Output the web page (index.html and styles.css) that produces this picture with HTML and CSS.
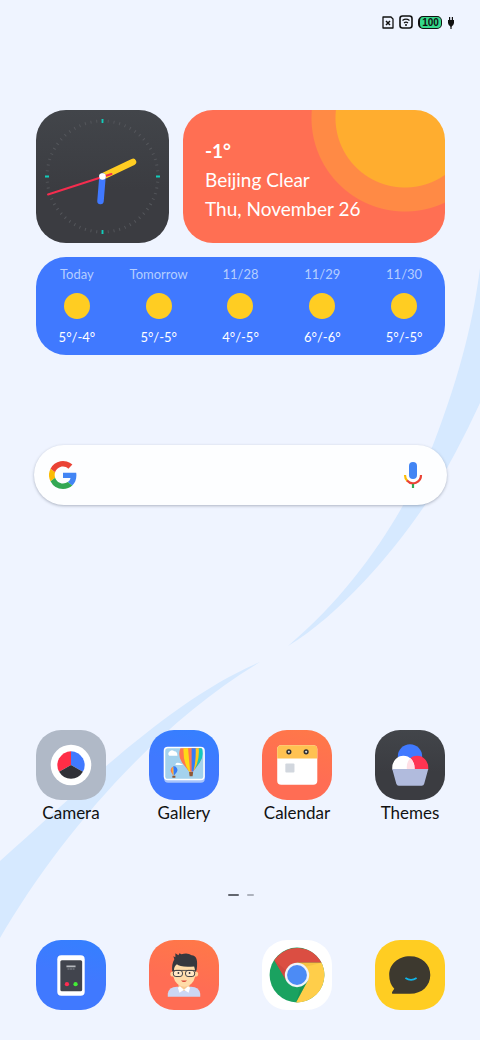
FILE: index.html
```html
<!DOCTYPE html>
<html lang="en">
<head>
    <meta charset="UTF-8">
    <meta name="viewport" content="width=device-width, initial-scale=1.0">
    <title>Home Screen</title>
    <link rel="stylesheet" href="styles.css">
</head>
<body>
    <svg class="wallpaper" viewBox="0 0 480 1040" preserveAspectRatio="none" aria-hidden="true">
        <path fill="#d6e9ff" d="M480 268C474 315 462 370 433 445C405 510 360 585 288 646C340 615 395 550 425 505C448 469 465 435 480 403Z"/>
        <path fill="#d6e9ff" d="M260 662C170 700 80 790 0 861V938C60 835 155 725 260 662Z"/>
    </svg>

    <div class="home">
        <header class="status-bar">
            <svg width="12" height="13" viewBox="0 0 12 13" fill="none" stroke="#111" aria-label="No SIM">
                <path d="M1 1h8l2 2v9H1z" stroke-width="1.3" stroke-linejoin="round"/>
                <path d="M4 5l4 4M8 5l-4 4" stroke-width="1.5"/>
            </svg>
            <svg width="14" height="14" viewBox="0 0 14 14" fill="none" stroke="#111" aria-label="Wi-Fi">
                <rect x="1" y="1" width="12" height="12" rx="2.5" stroke-width="1.6"/>
                <path d="M3.5 5.5q3.5-2.6 7 0M5 8q2-1.6 4 0" stroke-width="1.3"/>
                <circle cx="7" cy="10" r="1" fill="#111" stroke="none"/>
            </svg>
            <span class="battery">100</span>
            <svg width="8" height="14" viewBox="0 0 8 14" aria-label="Charging">
                <path d="M2.6 2v4M5.4 2v4M4 8v6" stroke="#111" stroke-width="1.2"/>
                <path d="M1 5h6v3q0 2-3 4q-3-2-3-4z" fill="#111"/>
            </svg>
        </header>

        <section class="widgets">
            <svg class="clock" viewBox="0 0 133 133" role="img" aria-label="Clock">
                <circle class="ticks" cx="66.5" cy="66.5" r="55.5" pathLength="360"/>
                <circle class="ticks-main" cx="66.5" cy="66.5" r="55.5" pathLength="360"/>
                <path d="M66.5 66.5L97 52" stroke="#ffcd22" stroke-width="6.5"/>
                <path d="M66.5 66.5L64.5 91" stroke="#4079ff" stroke-width="6.5"/>
                <path d="M12 84.5L75.5 64" stroke="#f42c4e" stroke-width="2"/>
                <circle cx="66.5" cy="66.5" r="3.3" fill="#fff"/>
            </svg>
            <div class="weather">
                <p class="temp">-1°</p>
                <p>Beijing Clear</p>
                <p>Thu, November 26</p>
            </div>
            <ul class="forecast">
                <li><span>Today</span><i class="sun"></i><b>5°/-4°</b></li>
                <li><span>Tomorrow</span><i class="sun"></i><b>5°/-5°</b></li>
                <li><span>11/28</span><i class="sun"></i><b>4°/-5°</b></li>
                <li><span>11/29</span><i class="sun"></i><b>6°/-6°</b></li>
                <li><span>11/30</span><i class="sun"></i><b>5°/-5°</b></li>
            </ul>
        </section>

        <form class="search">
            <svg width="28" height="28" viewBox="0 0 48 48" aria-hidden="true">
                <path fill="#fbbc05" d="M10.5 28.6A14 14 0 0 1 10.5 19.4L2.6 13.2a24 24 0 0 0 0 21.6z"/>
                <path fill="#ea4335" d="M24 9.5c3.5 0 6.7 1.2 9.2 3.6l6.9-6.9A24 24 0 0 0 2.6 13.2l7.9 6.2C12.4 13.7 17.7 9.5 24 9.5z"/>
                <path fill="#4285f4" d="M47 24.5c0-1.6-.2-3.1-.4-4.5H24v9h12.9c-.6 3-2.3 5.5-4.8 7.2l7.7 6C44.4 38 47 32 47 24.5z"/>
                <path fill="#34a853" d="M24 48c6.5 0 11.9-2.1 15.9-5.8l-7.7-6c-2.2 1.5-5 2.3-8.2 2.3-6.3 0-11.6-4.2-13.5-9.9l-7.9 6.2A24 24 0 0 0 24 48z"/>
            </svg>
            <input type="text" aria-label="Search">
            <button type="button" aria-label="Voice search">
                <svg width="20" height="28" viewBox="0 0 20 28" fill="none" stroke-width="2.2">
                    <rect x="6" y="1" width="8" height="17" rx="4" fill="#4285f4"/>
                    <path d="M2 14a8 8 0 0 0 2.500 6" stroke="#fbbc05"/>
                    <path d="M4 19.500A8 8 0 0 0 18 14" stroke="#ea4335"/>
                    <path d="M10 23v4" stroke="#34a853"/>
                </svg>
            </button>
        </form>

        <nav class="apps">
            <a class="app" href="#camera">
                <svg class="icon camera" viewBox="0 0 69 69" aria-hidden="true">
                    <circle cx="34.5" cy="34.5" r="20" fill="#fff"/>
                    <path fill="#ff2d46" d="M34.5 34.5V21a13.5 13.5 0 0 0-11.7 20.2z"/>
                    <path fill="#4079ff" d="M34.5 34.5V21a13.5 13.5 0 0 1 11.7 20.2z"/>
                    <path fill="#303137" d="M34.5 34.5l11.7 6.7a13.5 13.5 0 0 1-23.4 0z"/>
                </svg>
                <span>Camera</span>
            </a>
            <a class="app" href="#gallery">
                <svg class="icon blue" viewBox="0 0 69 69" aria-hidden="true">
                    <rect x="15" y="20" width="40" height="32" rx="4" fill="#a9c4fb"/>
                    <rect x="14.5" y="16.5" width="40.5" height="33" rx="4" fill="#fff"/>
                    <rect x="16" y="18" width="37.5" height="30" rx="2.5" fill="#a4d2ed"/>
                    <path fill="#fff" d="M20 25.5a2.5 2.5 0 0 1 0-4q2-3 5-.5q3 0 3 4.500zM26 34.500q0-3 4-2l4 2z"/>
                    <!-- big balloon -->
                    <path fill="#ff7750" d="M31 18h20q3 8-1 14l-6.500 9h-4l-7-9q-4.500-7-1.500-14z"/>
                    <path fill="#ffda16" d="M34 18h7v23h-1.500q-6-9-5.500-23z"/>
                    <path fill="#ff7750" d="M38.500 18h4v23h-2z"/>
                    <path fill="#367cf6" d="M42 18h5q1 13-3.500 23H42z"/>
                    <path fill="#ffc91c" d="M46 18h3.500q1 13-5.500 22q2.500-10 2-22z"/>
                    <path fill="#16c8bd" d="M49 18h3q2.500 8-2 14l-5 7q5-10 4-21z"/>
                    <path fill="#8e5836" d="M39.5 41.5h4l-.5 4h-3z"/>
                    <!-- small balloon -->
                    <path fill="#ff7750" d="M24 36a4 4 0 0 0-2 6l2 3z"/>
                    <path fill="#ffda16" d="M24 35.5q-2 4 0 9.5z"/>
                    <path fill="#367cf6" d="M24 35.5a4 4 0 0 1 3.5 6l-3 3.500z"/>
                    <path fill="#8e5836" d="M23 45h3v2h-3z"/>
                </svg>
                <span>Gallery</span>
            </a>
            <a class="app" href="#calendar">
                <svg class="icon orange" viewBox="0 0 69 69" aria-hidden="true">
                    <rect x="15" y="15" width="39.5" height="39" rx="4" fill="#fff"/>
                    <path fill="#ffc251" d="M15 28v-9q0-4 4-4h31.500q4 0 4 4v9z"/>
                    <circle cx="26.5" cy="21.5" r="1.800" fill="#ddd" stroke="#333" stroke-width="1.5"/>
                    <circle cx="43.5" cy="21.5" r="1.800" fill="#ddd" stroke="#333" stroke-width="1.5"/>
                    <rect x="23" y="33" width="9" height="9" rx="1" fill="#d2d7de"/>
                </svg>
                <span>Calendar</span>
            </a>
            <a class="app" href="#themes">
                <svg class="icon themes" viewBox="0 0 69 69" aria-hidden="true">
                    <circle cx="34.5" cy="26" r="12" fill="#4079ff"/>
                    <path fill="#ff3452" d="M52.5 39v-2a11 11.500 0 0 0-22 0v2z"/>
                    <path fill="#fff" d="M17 39v-2a11 11.500 0 0 1 22 0v2z"/>
                    <path fill="#ffdfe5" d="M35 27.500q4 4 4 11.500h-7.500q-1-7 3.500-11.500z"/>
                    <path fill="#b1bbdd" d="M17 38.5h35.500l-4 14.500q-.5 2-2.500 2H23.500q-2 0-2.500-2z"/>
                </svg>
                <span>Themes</span>
            </a>
        </nav>

        <div class="pages"><i class="current"></i><i></i></div>

        <nav class="apps dock">
            <a class="app" href="#phone" aria-label="Phone">
                <svg class="icon blue" viewBox="0 0 69 69" aria-hidden="true">
                    <rect x="21" y="15" width="27" height="40" rx="4" fill="#fff"/>
                    <rect x="24" y="20" width="21.5" height="30.5" rx="1.5" fill="#41444d"/>
                    <path d="M30 26h9" stroke="#b5b7bc" stroke-width="1.5"/>
                    <path d="M31 28.5h7" stroke="#858890" stroke-dasharray="2 .5"/>
                    <circle cx="30.5" cy="43.5" r="2.100" fill="#ff2c51"/>
                    <circle cx="39" cy="43.5" r="2.100" fill="#43ed36"/>
                </svg>
            </a>
            <a class="app" href="#contacts" aria-label="Contacts">
                <svg class="icon orange" viewBox="0 0 69 69" aria-hidden="true">
                    <path fill="#ccd7f3" d="M18.5 56v-3q1-7 9-7h14q8 0 9 7v3z"/>
                    <path fill="#f8c890" d="M29 40h11v7q-5 6-11 0z"/>
                    <path fill="#fff" d="M28.5 47l2-1.500 4 3.500 4-3.500 2 1.500-1.500 5-4.500-3-4.500 3z"/>
                    <circle cx="23.5" cy="33.5" r="2.5" fill="#ffd09a"/>
                    <circle cx="46" cy="33.5" r="2.5" fill="#ffd09a"/>
                    <path fill="#ffdca8" d="M24 23h21.500v13q-2 9-10.500 10q-9-1-11-10z"/>
                    <path fill="#36383e" d="M23 31q-1-7 2-12l-1-3 2 1v-4l3 2 1-2 2 1q6-2 10 1q7 0 5 14l-1 3-1.500-6q-14 1-17-2-3 2-3 7z"/>
                    <path d="M23 30h23" stroke="#34363b" stroke-width=".8"/>
                    <rect x="24" y="30" width="9" height="6" rx="2.5" fill="#ffe8c6" stroke="#34363b" stroke-width=".9"/>
                    <rect x="36" y="30" width="9" height="6" rx="2.5" fill="#ffe8c6" stroke="#34363b" stroke-width=".9"/>
                    <circle cx="29" cy="32.5" r=".9" fill="#34363b"/>
                    <circle cx="40" cy="32.5" r=".9" fill="#34363b"/>
                    <path fill="#d94436" d="M31.5 40h6q-3 3-6 0z"/>
                </svg>
            </a>
            <a class="app" href="#chrome" aria-label="Chrome">
                <svg class="icon chrome" viewBox="0 0 69 69" aria-hidden="true">
                    <circle cx="34.5" cy="34.5" r="27" fill="#1aa260"/>
                    <path fill="#db4e42" d="M12.100 20A27 27 0 0 1 58.700 22.500H34.500L24.100 40.500z"/>
                    <path fill="#ffce4a" d="M34.5 22.5H58.700A27 27 0 0 1 33.5 61.500L44.900 40.500z"/>
                    <path fill="#b53c34" opacity=".3" d="M12.100 20L24.100 40.500L25 31z"/>
                    <path fill="#e4ae36" opacity=".35" d="M34.5 22.5H58.700L44 26z"/>
                    <path fill="#128148" opacity=".4" d="M33.5 61.5L44.900 40.500L38 46z"/>
                    <circle cx="34.5" cy="34.5" r="12" fill="#f1f3f7"/>
                    <circle cx="34.5" cy="34.5" r="9.800" fill="#4c8bf5"/>
                </svg>
            </a>
            <a class="app" href="#messages" aria-label="Messages">
                <svg class="icon messages" viewBox="0 0 69 69" aria-hidden="true">
                    <path fill="#3d392f" d="M34.5 16c12 0 20 8 20 18.500s-8 18.500-20 18.500H18q-2 0-1-2l2-3q-5-5-5-13.500C14 24 22.500 16 34.500 16z"/>
                    <path d="M30 37.500q5.500 3.500 11 0" fill="none" stroke="#10b4e8" stroke-width="1.800"/>
                </svg>
            </a>
        </nav>
    </div>
</body>
</html>
```
FILE: styles.css
```css
:root {
    --blue: #4079ff;
    --orange: #ff6f53;
    --yellow: #ffcd22;
    --dark: #3b3c41;
    --background-color: #eff4ff;
}

* {
    margin: 0;
    padding: 0;
    box-sizing: border-box;
}

body {
    font-family: Lato, sans-serif;
    background-color: var(--background-color);
    color: #111;
}

.wallpaper {
    position: absolute;
    top: 0;
    left: 0;
    width: 100%;
    height: 100%;
    z-index: -1;
}

.home {
    min-height: 100vh;
    display: flex;
    flex-direction: column;
    padding: 0 35px 30px 36px;
}

.status-bar {
    display: flex;
    align-items: center;
    justify-content: flex-end;
    gap: 5px;
    height: 44px;
    margin-right: -10px;
}

.battery {
    width: 24px;
    height: 13px;
    border: 1px solid #111;
    border-left-width: 2px;
    border-radius: 5px;
    background-color: #35d98b;
    font: bold 10px/11px "Liberation Sans", sans-serif;
    text-align: center;
}

/* Widgets */
.widgets {
    display: grid;
    grid-template-columns: 133px 1fr;
    gap: 14px;
    margin-top: 66px;
}

.clock {
    width: 100%;
    border-radius: 30px;
    background: linear-gradient(#42454a, var(--dark) 60%);
    fill: none;
    stroke-linecap: round;
}

.ticks,
.ticks-main {
    stroke: #55575c;
    stroke-width: 3;
    stroke-linecap: butt;
    stroke-dasharray: 1 5;
    stroke-dashoffset: 0.5;
}

.ticks-main {
    stroke: #12cdbb;
    stroke-width: 4;
    stroke-dasharray: 2 88;
    stroke-dashoffset: 1;
}

.weather {
    display: flex;
    flex-direction: column;
    justify-content: center;
    padding: 6px 22px 0;
    border-radius: 30px;
    background: radial-gradient(circle at right 40px top 8px, #ffad2f 69px, #ff8a45 70px, #ff8a45 93px, var(--orange) 94px);
    color: #fff;
    font-size: 19px;
    line-height: 29px;
}

.temp {
    font-weight: bold;
}

.forecast {
    grid-column: 1 / -1;
    display: grid;
    grid-template-columns: repeat(5, 1fr);
    padding: 9px 0;
    border-radius: 30px;
    background-color: var(--blue);
    list-style: none;
}

.forecast li {
    display: flex;
    flex-direction: column;
    align-items: center;
    gap: 10px;
    color: #fff;
    font-size: 13px;
    line-height: 17px;
}

.forecast span {
    color: #b5ceff;
}

.forecast b {
    font-weight: normal;
}

.sun {
    width: 26px;
    height: 26px;
    border-radius: 50%;
    background-color: var(--yellow);
}

/* Search */
.search {
    display: flex;
    align-items: center;
    height: 60px;
    margin: 90px -2px 0;
    padding: 0 24px 0 15px;
    border-radius: 30px;
    background-color: #fdfeff;
    box-shadow: 0 1px 3px rgba(50, 60, 80, 0.35);
}

.search input {
    flex: 1;
    min-width: 0;
    height: 40px;
    border: none;
    outline: none;
    background: none;
    font-size: 16px;
}

.search button {
    display: flex;
    border: none;
    background: none;
    cursor: pointer;
}

/* Apps */
.apps {
    display: flex;
    justify-content: space-between;
    margin-top: 225px;
}

.app {
    display: flex;
    flex-direction: column;
    align-items: center;
    gap: 3px;
    width: 70px;
    color: #111;
    font-size: 17px;
    line-height: 20px;
    text-decoration: none;
}

.icon {
    width: 70px;
    height: 70px;
    border-radius: 25px;
}

.camera {
    background-color: #b0b9c7;
}

.blue {
    background: linear-gradient(15deg, #4079ff 50%, #3480ff);
}

.orange {
    background: linear-gradient(15deg, #ff6d54 40%, #ff7947);
}

.themes {
    background: linear-gradient(#42454a, var(--dark) 60%);
}

.chrome {
    background-color: #fff;
}

.messages {
    background-color: var(--yellow);
}

.pages {
    display: flex;
    justify-content: center;
    gap: 8px;
    margin-top: 71px;
}

.pages i {
    width: 7px;
    height: 2px;
    border-radius: 1px;
    background-color: #adb2bd;
}

.pages .current {
    width: 11px;
    background-color: #62666f;
}

.dock {
    margin-top: 44px;
}
```
